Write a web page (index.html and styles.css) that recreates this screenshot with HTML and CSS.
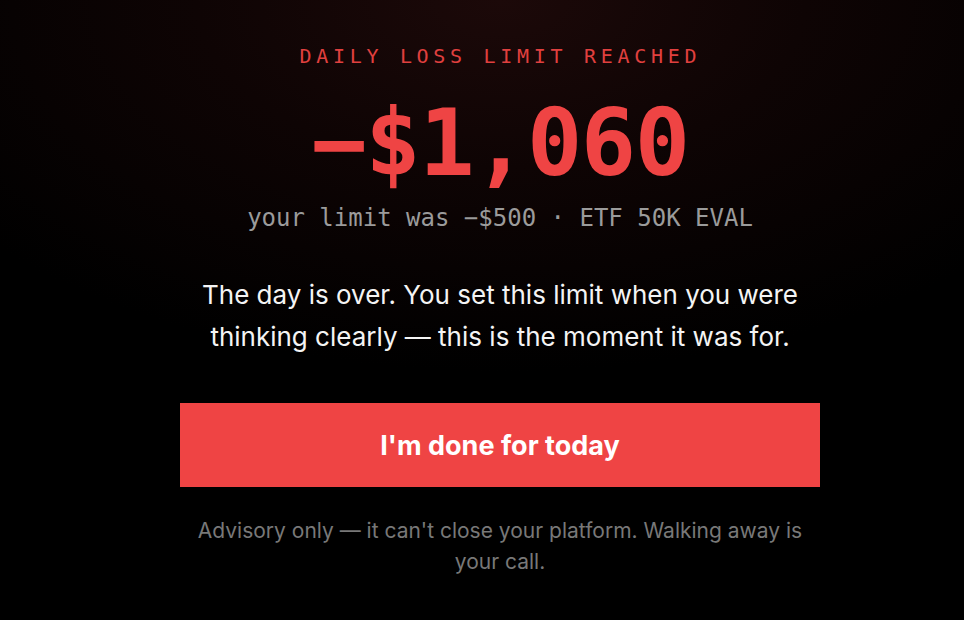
FILE: index.html
```html
<!DOCTYPE html>
<html lang="en">
<head>
<meta charset="utf-8">
<title>Daily loss limit reached</title>
<link rel="stylesheet" href="styles.css">
</head>
<body>
<main class="screen">
  <section class="panel">
    <div class="label">DAILY LOSS LIMIT REACHED</div>
    <div class="amount">−$1,060</div>
    <div class="sub">your limit was −$500 · ETF 50K EVAL</div>
    <p class="message">The day is over. You set this limit when you were thinking clearly — this is the moment it was for.</p>
    <button class="done" type="button">I'm done for today</button>
    <p class="note">Advisory only — it can't close your platform. Walking away is your call.</p>
  </section>
</main>
</body>
</html>
```

FILE: styles.css
```css
html, body {
  margin: 0;
  padding: 0;
  height: 100%;
}
body {
  background: #000;
  font-family: "Inter", "Liberation Sans", sans-serif;
  color: #f2f2f2;
}
.screen {
  min-height: 100%;
  display: flex;
  justify-content: center;
  padding-left: 36px;
  box-sizing: border-box;
  background: radial-gradient(ellipse 70% 60% at 52% 0%, #1c0909 0%, #0e0404 45%, #000 100%);
}
.panel {
  width: 640px;
  display: flex;
  flex-direction: column;
  align-items: center;
  text-align: center;
  padding-top: 43px;
}
.label {
  font-family: "DejaVu Sans Mono", monospace;
  font-size: 20px;
  letter-spacing: 0.235em;
  margin-right: -0.235em;
  margin-left: -4px;
  color: #e0403f;
  line-height: 26px;
}
.amount {
  font-family: "DejaVu Sans Mono", monospace;
  font-weight: bold;
  font-size: 92px;
  letter-spacing: -1.5px;
  color: #ef4444;
  line-height: 100px;
  margin-top: 25px;
}
.sub {
  font-family: "DejaVu Sans Mono", monospace;
  font-size: 24px;
  color: #9b9b9b;
  line-height: 30px;
  margin-top: 9px;
}
.message {
  margin: 41px 0 0;
  font-size: 26px;
  line-height: 42px;
  color: #f4f4f4;
}
.done {
  margin-top: 45px;
  width: 640px;
  height: 84px;
  border: 0;
  border-radius: 0;
  background: #ef4444;
  color: #fff;
  font-family: "Inter", "Liberation Sans", sans-serif;
  font-weight: 700;
  font-size: 27px;
  cursor: pointer;
}
.note {
  margin: 28px 0 0;
  font-size: 21px;
  line-height: 31px;
  color: #787878;
}
```
